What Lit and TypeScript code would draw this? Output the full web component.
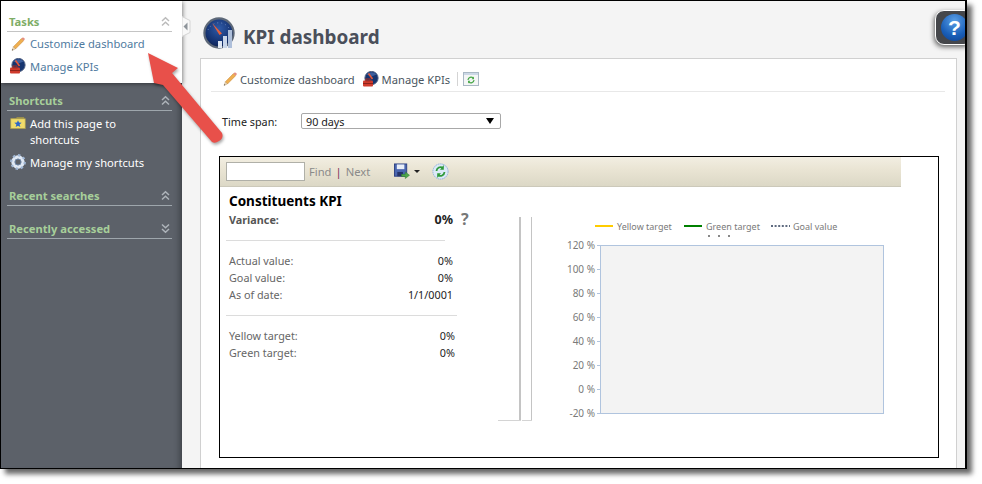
import { LitElement, html, css, svg } from "lit";
import { customElement } from "lit/decorators.js";

const pencil = html`<svg class="ic" width="16" height="16" viewBox="0 0 16 16"><path d="M3.4 10.8 L11.5 2.6 L13.6 4.7 L5.4 13 Z" fill="#f0b050" stroke="#c98a3a" stroke-width=".6"/><path d="M11.5 2.6 L12.6 1.5 Q13.4 1.1 14.2 2 Q15 2.9 14.6 3.6 L13.6 4.7 Z" fill="#e58f80"/><path d="M3.4 10.8 L5.4 13 L2 14.4 Z" fill="#f3dcb8" stroke="#a98a60" stroke-width=".4"/><path d="M2 14.4 L2.5 13.1 L3.3 13.9 Z" fill="#444"/></svg>`;

const kpi = html`<svg class="ic kpi" width="16" height="17" viewBox="0 0 16 17"><circle cx="8.5" cy="7" r="6.6" fill="#16356f" stroke="#4d5e80" stroke-width="1"/><path d="M3.5 3.6 A6.6 6.6 0 0 1 13.5 3.6 L8.5 5.6 Z" fill="#3c5e9c"/><path d="M5.5 2.5 L9.5 8" stroke="#e8583a" stroke-width="1.6"/><rect x="0" y="9.5" width="10" height="6" rx="1" fill="#cf3b2c"/><rect x="3" y="8" width="4" height="2" fill="none" stroke="#a92c20" stroke-width="1"/><rect x="0" y="12" width="10" height="1" fill="#8c231a"/></svg>`;

const folder = html`<svg class="ic" width="16" height="16" viewBox="0 0 17 16"><path d="M1 3 H6 L7.5 1.5 H15 V4 H1 Z" fill="#9a8f4e"/><rect x=".8" y="3.5" width="15.4" height="10.5" fill="#f1dc6a" stroke="#a69a50" stroke-width=".8"/><path d="M8.5 5 L9.6 7.6 L12.4 7.8 L10.2 9.6 L11 12.3 L8.5 10.9 L6 12.3 L6.8 9.6 L4.6 7.8 L7.4 7.6 Z" fill="#2c66c8"/></svg>`;

const gear = html`<svg class="ic" width="16" height="16" viewBox="0 0 16 16"><circle cx="8" cy="8" r="5" fill="none" stroke="#dfe8f4" stroke-width="3.4"/><circle cx="8" cy="8" r="6.8" fill="none" stroke="#9fb6d4" stroke-width="2.2" stroke-dasharray="2.4 2.9"/><circle cx="8" cy="8" r="3" fill="none" stroke="#6f8db5" stroke-width=".8"/></svg>`;

const miniRefresh = html`<svg width="16" height="14" viewBox="0 0 16 14"><rect x=".5" y=".5" width="15" height="13" fill="#f4f6f6" stroke="#a9b8c4"/><rect x="1" y="1" width="14" height="2" fill="#ccd8e6"/><path d="M5 8 A3 3 0 0 1 10.2 6.2 M11 8 A3 3 0 0 1 5.8 9.8" fill="none" stroke="#48a848" stroke-width="1.2"/><path d="M11 4.6 V7.2 H8.6 Z M5 11.4 V8.8 H7.4 Z" fill="#48a848"/></svg>`;

const save = html`<svg width="16" height="17" viewBox="0 0 17 17"><rect x=".5" y=".5" width="13" height="13" fill="#4a66b0" stroke="#2d4080"/><rect x="3" y="1" width="8" height="5" fill="#e8eef8"/><rect x="3.5" y="9" width="6" height="4.5" fill="#26346a"/><path d="M8 11.5 H12 V9 L16.5 12.5 L12 16 V13.8 H8 Z" fill="#4fa84a" stroke="#2f7a2f" stroke-width=".5"/></svg>`;

const roundRefresh = html`<svg width="17" height="17" viewBox="0 0 17 17"><circle cx="8.5" cy="8.5" r="7.6" fill="#dbe9f8" stroke="#8fb0de" stroke-dasharray="1.5 .7"/><path d="M4.5 8 A4.2 4.2 0 0 1 11 4.8" fill="none" stroke="#2f9a3a" stroke-width="1.8"/><path d="M12.5 9 A4.2 4.2 0 0 1 6 12.2" fill="none" stroke="#2f9a3a" stroke-width="1.8"/><path d="M11.8 2 V6.8 H8 Z M5.2 15 V10.2 H9 Z" fill="#2f9a3a"/></svg>`;

const gauge = html`<svg width="33" height="33" viewBox="0 0 33 33"><defs><radialGradient id="g" cx=".5" cy=".35" r=".7"><stop offset="0" stop-color="#2f5ba8"/><stop offset=".7" stop-color="#14306e"/><stop offset="1" stop-color="#0c1d48"/></radialGradient></defs><circle cx="16" cy="16" r="14.6" fill="url(#g)" stroke="#5d6878" stroke-width="2.2"/><path d="M5 13 A12 12 0 0 1 27 13" fill="none" stroke="#7f9bcb" stroke-width=".8" stroke-dasharray="1 3"/><path d="M9 6 L19 16.5 L16.5 18 Z" fill="#e9603a"/><rect x="15" y="24" width="4" height="7" fill="#dfe7f3"/><rect x="20" y="19" width="4" height="12" fill="#c9d6ea"/><rect x="25" y="13" width="4" height="18" fill="#aebfda"/></svg>`;

const chev = (up: boolean) => html`<svg class="chev" width="11" height="11" viewBox="0 0 11 11"><path d=${up ? "M2 5 L5.5 1.8 L9 5 M2 9.5 L5.5 6.3 L9 9.5" : "M2 1.5 L5.5 4.7 L9 1.5 M2 6 L5.5 9.2 L9 6"} fill="none" stroke="currentColor" stroke-width="1.5"/></svg>`;

const chart = () => {
  const labels = ["120 %", "100 %", "80 %", "60 %", "40 %", "20 %", "0 %", "-20 %"];
  return html`<svg class="chart" width="410" height="250" viewBox="490 187 410 250">
    <rect x="519" y="217" width="2" height="203" fill="#c4c4c4"/>
    <rect x="531" y="217" width="1" height="203" fill="#c4c4c4"/>
    <rect x="498" y="420" width="23" height="1" fill="#d4d4d4"/>
    <rect x="522" y="420" width="10" height="1" fill="#d4d4d4"/>
    <rect x="595" y="225" width="18" height="2" fill="#ffcc00"/>
    <text x="617" y="229.5" class="l">Yellow target</text>
    <rect x="684" y="225" width="18" height="2" fill="#008000"/>
    <text x="706" y="229.5" class="l">Green target</text>
    <path d="M771 226 H790" stroke="#5f6b80" stroke-width="2" stroke-dasharray="2 1.6"/>
    <text x="793" y="229.5" class="l">Goal value</text>
    <rect x="708" y="235" width="2" height="2" fill="#888"/>
    <rect x="718" y="235" width="2" height="2" fill="#888"/>
    <rect x="728" y="235" width="2" height="2" fill="#888"/>
    <rect x="600.5" y="245.5" width="283" height="168" fill="#f3f3f3" stroke="#b0c4de"/>
    ${labels.map((l, i) => svg`<text x="595" y=${249 + i * 24} text-anchor="end" class="t">${l}</text><path d="M597 ${245.5 + i * 24} H600" stroke="#b0c4de"/>`)}
  </svg>`;
};

@customElement("app-root")
export class AppRoot extends LitElement {
  static styles = css`
    :host { display: block; position: relative; width: 982px; height: 484px; background: #fff; overflow: hidden;
      font-family: "Noto Sans", "Open Sans", sans-serif; font-size: 11.2px; }
    * { box-sizing: border-box; }
    svg { display: block; flex: none; }
    .win { position: relative; width: 967px; height: 469px; border: 1px solid #000; border-right-width: 2px;
      display: flex; background: #f4f4f4; box-shadow: 5px 5px 5px rgba(0,0,0,.6); overflow: hidden; }
    .side { width: 181px; flex: none; background: #5c6169; box-shadow: inset -7px 0 6px -5px rgba(0,0,0,.35); color: #fff; }
    .tasks { background: #fff; height: 82px; padding-top: 11px; box-shadow: 1px 1px 4px rgba(0,0,0,.45); position: relative; }
    .dark { padding-top: 8px; }
    .head { height: 20px; margin: 0 10px 0 6px; padding: 0 1px 0 2px; border-bottom: 1px solid #9ea6ac;
      display: flex; justify-content: space-between; align-items: center;
      font-weight: 700; font-size: 11.2px; color: #a7cf9a; line-height: 19px; }
    .tasks .head { color: #7ead66; border-bottom-color: #c4c4c4; }
    .head + .head { margin-top: 13px; }
    .chev { color: #aeb4ba; }
    .tasks .chev { color: #bbb; }
    .row { display: flex; align-items: center; height: 23px; margin-left: 9px; gap: 4px; color: #4f7ba0; line-height: 16px; }
    .tasks .row:first-of-type { margin-top: 1px; }
    .row.tall { align-items: flex-start; height: auto; color: #fff; margin-top: 5px; }
    .row.tall .ic { margin-top: -1px; }
    .row.tall + .row.tall { margin-top: 7px; }
    .row.tall.last { margin-bottom: 15px; }
    .tab { position: absolute; left: 181px; top: 15px; }
    .main { flex: 1; min-width: 0; display: flex; flex-direction: column; }
    .title { height: 57px; flex: none; display: flex; gap: 7px; padding: 16px 0 0 21px; }
    h1 { margin: 4px 0 0; font-size: 18.9px; line-height: 32px; font-weight: 700; color: #4a4f5a; }
    .card { flex: 1; margin: 0 8px 0 18px; background: #fff; border: 1px solid #d0d0d0; border-bottom: 0; padding-left: 10px; }
    .tb { height: 33px; margin-right: 11px; padding: 10px 0 2px 11px; border-bottom: 1px solid #e8e8e8;
      display: flex; align-items: center; color: #4a5560; }
    .tb .ic { margin-right: 2px; }
    .tb .kpi { margin-right: 3px; }
    .tb .ic + .lbl { margin-right: 8px; }
    .tb .sep { width: 1px; height: 14px; background: #d4d4d4; margin: 0 5px 0 -1px; }
    .span { display: flex; align-items: center; margin-top: 21px; height: 16px; padding-left: 11px; font-size: 10.8px; color: #222; }
    .span .k { width: 79px; }
    .sel { width: 200px; height: 16px; border: 1px solid #a8a8a8; border-radius: 2px; background: #fff; padding: 0 5px 0 4px;
      display: flex; justify-content: space-between; align-items: center; }
    .sel i { width: 0; height: 0; border: 4px solid transparent; border-bottom: 0; border-top: 6px solid #000; margin-right: 1px; }
    .box { width: 720px; height: 302px; margin: 27px 0 0 8px; border: 1px solid #000; }
    .bar { width: 681px; height: 30px; display: flex; align-items: center; padding-left: 6px;
      background: linear-gradient(#f2eee2, #e9e4d3 45%, #dcd8c6); border-bottom: 1px solid #ccc9ba; color: #8a8a8a; }
    .inp { width: 79px; height: 19px; background: #fff; border: 1px solid #b0b0a8; margin-right: 4px; }
    .pipe { color: #7a2a5a; margin: 0 4px; }
    .save { margin-left: 24px; }
    .caret { width: 0; height: 0; border: 3px solid transparent; border-bottom: 0; border-top: 3px solid #222; margin: 0 12px 0 4px; }
    .body { display: flex; }
    .left { width: 270px; flex: none; padding: 5px 0 0 6px; }
    h2 { margin: 0 0 0 3px; font-size: 13.5px; line-height: 19px; font-weight: 700; color: #000; }
    .st { display: flex; justify-content: space-between; height: 17px; line-height: 17px; width: 224px; margin-left: 3px; font-size: 10.8px; color: #666; }
    .st b { font-weight: 400; color: #222; }
    .st.var { height: 18px; line-height: 18px; font-weight: 700; color: #555; position: relative; }
    .st.var b { font-weight: 700; color: #222; font-size: 12.5px; }
    .q { position: absolute; left: 232px; top: -1px; font-size: 16px; font-weight: 700; color: #777; }
    .st.nudge { width: 226px; }
    hr { border: 0; height: 1px; background: #dcdcdc; margin: 11px 0; }
    hr.a { width: 219px; } hr.b { width: 231px; margin-top: 12px; }
    .chart text { font-family: "Noto Sans", sans-serif; fill: #7a7a7a; }
    .chart .t { font-size: 10px; }
    .chart .l { font-size: 9px; }
    .help { position: absolute; right: -8px; top: 9px; width: 38px; height: 35px; border-radius: 9px; background: #45474b;
      border: 1.5px solid #fff; box-shadow: -1px 2px 5px rgba(0,0,0,.6); display: flex; align-items: center; padding-left: 5px; }
    .help span { width: 27px; height: 27px; border-radius: 50%; flex: none; color: #fff; font: 700 21px/27px "Liberation Sans", sans-serif; text-align: center;
      background: radial-gradient(circle at 50% 25%, #5a9fe6, #1a5fb8 60%, #0d3f8e); }
    .arrow { position: absolute; left: 139px; top: 44px; pointer-events: none; filter: drop-shadow(1px 2px 1.5px rgba(0,0,0,.35)); }
  `;

  render() {
    return html`<div class="win">
      <aside class="side">
        <section class="tasks">
          <div class="head"><span>Tasks</span>${chev(true)}</div>
          <div class="row">${pencil}<span>Customize dashboard</span></div>
          <div class="row">${kpi}<span>Manage KPIs</span></div>
        </section>
        <section class="dark">
          <div class="head"><span>Shortcuts</span>${chev(true)}</div>
          <div class="row tall">${folder}<span>Add this page to<br />shortcuts</span></div>
          <div class="row tall last">${gear}<span>Manage my shortcuts</span></div>
          <div class="head"><span>Recent searches</span>${chev(true)}</div>
          <div class="head"><span>Recently accessed</span>${chev(false)}</div>
        </section>
      </aside>
      <svg class="tab" width="9" height="21" viewBox="0 0 9 21"><path d="M0 .5 L8 4.5 V16.5 L0 20.5 Z" fill="#f8f8f8" stroke="#d4d4d4"/><path d="M5.5 6.5 L1.5 10.5 L5.5 14.5 Z" fill="#8e949a"/></svg>
      <main class="main">
        <div class="title">${gauge}<h1>KPI dashboard</h1></div>
        <div class="card">
          <div class="tb">
            ${pencil}<span class="lbl">Customize dashboard</span>
            ${kpi}<span class="lbl">Manage KPIs</span>
            <span class="sep"></span>${miniRefresh}
          </div>
          <div class="span"><span class="k">Time span:</span><div class="sel"><span>90 days</span><i></i></div></div>
          <div class="box">
            <div class="bar">
              <div class="inp"></div><span>Find</span><span class="pipe">|</span><span>Next</span>
              <span class="save">${save}</span><span class="caret"></span>${roundRefresh}
            </div>
            <div class="body">
              <div class="left">
                <h2>Constituents KPI</h2>
                <div class="st var"><span>Variance:</span><b>0%</b><span class="q">?</span></div>
                <hr class="a" />
                <div class="st"><span>Actual value:</span><b>0%</b></div>
                <div class="st"><span>Goal value:</span><b>0%</b></div>
                <div class="st"><span>As of date:</span><b>1/1/0001</b></div>
                <hr class="b" />
                <div class="st nudge"><span>Yellow target:</span><b>0%</b></div>
                <div class="st nudge"><span>Green target:</span><b>0%</b></div>
              </div>
              ${chart()}
            </div>
          </div>
        </div>
      </main>
      <div class="help"><span>?</span></div>
      <svg class="arrow" width="90" height="105" viewBox="140 45 90 105">
        <path d="M148 53 L178 68 L172 73 L222 133 Q224 138 219 141 Q215 144 212 142 L163 85 L154 83 Z" fill="#e8504a"/>
      </svg>
    </div>`;
  }
}
